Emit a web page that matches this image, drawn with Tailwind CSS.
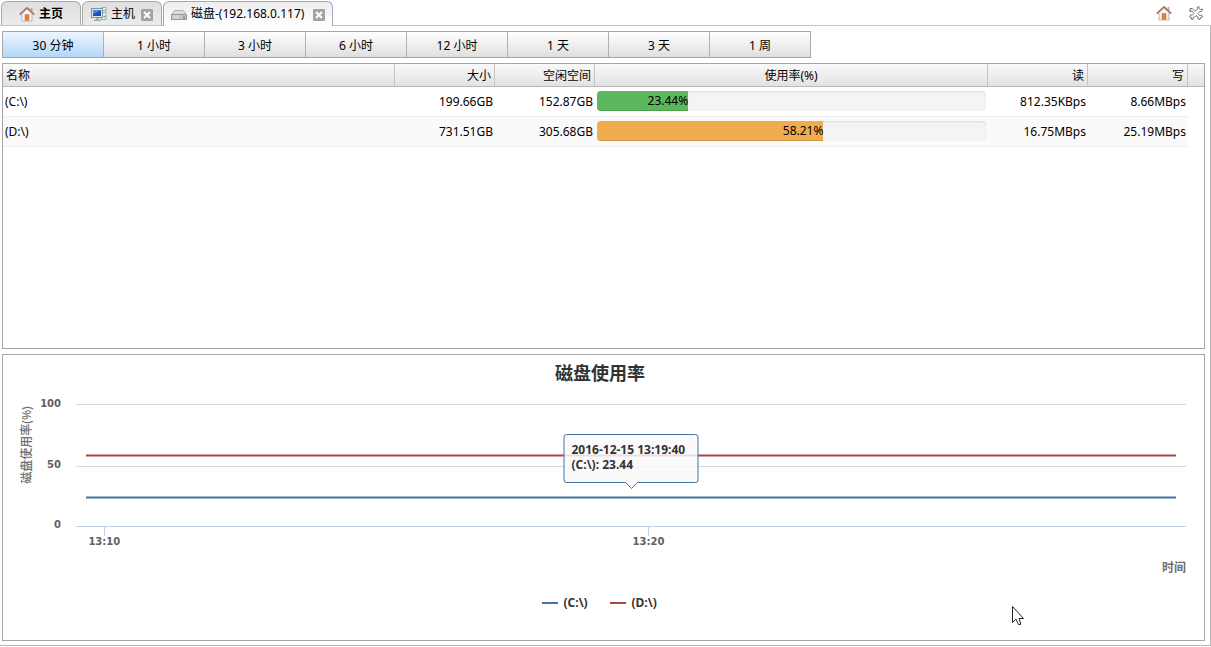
<!DOCTYPE html>
<html lang="zh-CN">
<head>
<meta charset="utf-8">
<title>磁盘</title>
<script src="https://cdn.jsdelivr.net/npm/@tailwindcss/browser@4"></script>
</head>
<body class="bg-white font-['Noto_Sans','Noto_Sans_CJK_SC',sans-serif] text-[12px] leading-4 text-black">
<svg class="hidden" aria-hidden="true">
  <symbol id="home" viewBox="0 0 16 16">
    <path d="M3 7.500 8 3 13 7.500V15H3Z" fill="#f6f6f6" stroke="#b9b9b9"/>
    <path d="M11.500 2h2v4l-2-2Z" fill="#c9a79a"/>
    <path d="M.7 8.600 8 1.800 15.300 8.600" fill="none" stroke="#a8705f" stroke-width="1.500"/>
    <path d="M6 8.500h4V14.500h-4Z" fill="#ea7a2c" stroke="#c9875a" stroke-width=".6"/>
  </symbol>
  <symbol id="host" viewBox="0 0 16 16">
    <path d="M10.500 1.500h4.500v12h-4.500Z" fill="#eef0f2" stroke="#a3a8ad"/>
    <path d="M11.500 4.500h3M11.500 6.500h3" stroke="#9da3a8"/>
    <path d="M12.500 10.500h2" stroke="#58b947" stroke-width="1.500"/>
    <rect x=".5" y="2.500" width="11" height="9" fill="#dde3ea" stroke="#8492a3"/>
    <path d="M2 4h8v6H2Z" fill="#1b4fb5"/>
    <path d="M2 4h8L2 8.500Z" fill="#4a86de"/>
    <path d="M5 12h3v1.500h2v1.500H3v-1.500h2Z" fill="#a3abb5"/>
  </symbol>
  <symbol id="disk" viewBox="0 0 16 16">
    <path d="M3.500 4.500h9L15.500 9v4.500h-15V9Z" fill="#dcdcdc" stroke="#b0b0b0"/>
    <path d="M.5 8.500h15v5H.5Z" fill="#c4c4c4" stroke="#969696"/>
    <path d="M2 10h6M2 12h6" stroke="#e6e6e6"/>
    <path d="M12 11.500h2" stroke="#d0565c" stroke-width="1.500"/>
  </symbol>
  <symbol id="close" viewBox="0 0 12 12">
    <rect width="12" height="12" rx="1" fill="#a3a3a3"/>
    <path d="M3 3 9 9M9 3 3 9" stroke="#fff" stroke-width="2"/>
  </symbol>
</svg>

<div class="flex h-screen min-h-[560px] flex-col pb-px">
  <header class="flex h-[26px] shrink-0 items-end justify-between border-b border-[#c3c3c3]">
    <nav class="flex items-end gap-px pl-px">
      <button class="flex h-6 w-20 items-center justify-center gap-1 rounded-t-md border border-b-0 border-[#aaa] bg-linear-to-b from-[#dedede] to-[#ececec] font-bold"><svg class="size-4"><use href="#home"/></svg>主页</button>
      <div class="flex h-6 w-20 items-center justify-center gap-1 rounded-t-md border border-b-0 border-[#aaa] bg-linear-to-b from-[#dedede] to-[#ececec]">
        <button class="flex items-center gap-1"><svg class="size-4"><use href="#host"/></svg>主机</button>
        <button class="ml-0.5 pt-0.5" aria-label="关闭主机"><svg class="size-3"><use href="#close"/></svg></button>
      </div>
      <div class="-mb-px flex h-[25px] w-[170px] items-center justify-between rounded-t-md border border-b-0 border-[#9ba9bd] bg-linear-to-b from-[#eeeeee] to-white px-[7px]">
        <button class="flex items-center gap-1 whitespace-nowrap"><svg class="size-4"><use href="#disk"/></svg>磁盘-(192.168.0.117)</button>
        <button class="pt-0.5" aria-label="关闭磁盘"><svg class="size-3"><use href="#close"/></svg></button>
      </div>
    </nav>
    <div class="flex gap-4 pr-[7px] pb-1">
      <button aria-label="主页"><svg class="size-4"><use href="#home"/></svg></button>
      <button aria-label="全部关闭"><svg class="size-4" viewBox="0 0 16 16"><path d="M2 3.500H4.500L6 5.500 7.500 6 9.500 4 9 2.500 11 1.500V3.500L12.500 4.500 14.500 4 13.500 6.500H11.500L10 8.500 11.500 10.500 13.500 10 14.500 12 12.500 12.500 12 14.500 10 14V12L8 10.500 6.500 12 5 12.500V14.500L3 14 3.500 12.500 1.500 12 2.500 10H4.500L6 8.500 4.500 6.500 2 6.500 1.500 5 3 5Z" fill="#fff" stroke="#777"/></svg></button>
    </div>
  </header>

  <main class="flex min-h-0 flex-1 flex-col gap-[5px] border-r border-b border-[#b5b5b5] pt-[5px] pr-[5px] pb-1 pl-0.5">
    <div class="flex h-[27px] w-[809px] max-w-full shrink-0 border border-[#a6a6a6] bg-linear-to-b from-white to-[#dfdfdf] *:pt-0.5">
      <button class="flex-1 bg-linear-to-b from-[#edf6ff] to-[#b3d7f8]">30 分钟</button>
      <button class="flex-1 border-l border-[#b0b0b0]">1 小时</button>
      <button class="flex-1 border-l border-[#b0b0b0]">3 小时</button>
      <button class="flex-1 border-l border-[#b0b0b0]">6 小时</button>
      <button class="flex-1 border-l border-[#b0b0b0]">12 小时</button>
      <button class="flex-1 border-l border-[#b0b0b0]">1 天</button>
      <button class="flex-1 border-l border-[#b0b0b0]">3 天</button>
      <button class="flex-1 border-l border-[#b0b0b0]">1 周</button>
    </div>

    <section class="min-h-0 flex-1 overflow-hidden border border-[#a6a6a6]">
      <table class="w-full table-fixed border-separate border-spacing-0">
        <colgroup><col class="w-[392px]"><col class="w-[100px]"><col class="w-[100px]"><col><col class="w-[100px]"><col class="w-[100px]"><col class="w-4"></colgroup>
        <thead>
          <tr class="h-[23px] *:border-b *:border-b-[#b8b8b8] *:bg-linear-to-b *:from-[#fafafa] *:to-[#e2e2e2] *:px-[3px] *:pt-0.5 *:pb-0 *:font-normal">
            <th class="border-r border-r-[#c4c4c4] text-left">名称</th>
            <th class="border-r border-r-[#c4c4c4] text-right">大小</th>
            <th class="border-r border-r-[#c4c4c4] text-right">空闲空间</th>
            <th class="border-r border-r-[#c4c4c4] text-center">使用率(%)</th>
            <th class="border-r border-r-[#c4c4c4] text-right">读</th>
            <th class="border-r border-r-[#c4c4c4] text-right">写</th>
            <td></td>
          </tr>
        </thead>
        <tbody>
          <tr class="h-[30px] text-right *:p-0 *:px-0.5">
            <td class="border-b border-[#eee] text-left">(C:\)</td>
            <td class="border-b border-[#eee]">199.66GB</td>
            <td class="border-b border-[#eee]">152.87GB</td>
            <td class="border-b border-[#eee] align-top"><div class="mt-1 h-5 overflow-hidden rounded bg-[#f4f4f4] shadow-[inset_0_1px_2px_#0000001a]"><div class="h-full bg-[#5cb85c] leading-5 shadow-[inset_0_-1px_0_#00000026]" style="width:23.44%">23.44%</div></div></td>
            <td class="border-b border-[#eee]">812.35KBps</td>
            <td class="border-b border-[#eee]">8.66MBps</td>
            <td></td>
          </tr>
          <tr class="h-[30px] text-right *:p-0 *:px-0.5">
            <td class="border-b border-[#eee] bg-[#fafafa] text-left">(D:\)</td>
            <td class="border-b border-[#eee] bg-[#fafafa]">731.51GB</td>
            <td class="border-b border-[#eee] bg-[#fafafa]">305.68GB</td>
            <td class="border-b border-[#eee] bg-[#fafafa] align-top"><div class="mt-1 h-5 overflow-hidden rounded bg-[#f4f4f4] shadow-[inset_0_1px_2px_#0000001a]"><div class="h-full bg-[#f0ad4e] leading-5 shadow-[inset_0_-1px_0_#00000026]" style="width:58.21%">58.21%</div></div></td>
            <td class="border-b border-[#eee] bg-[#fafafa]">16.75MBps</td>
            <td class="border-b border-[#eee] bg-[#fafafa]">25.19MBps</td>
            <td></td>
          </tr>
        </tbody>
      </table>
    </section>

    <section class="flex shrink-0 flex-col border border-[#a6a6a6] pr-[18px] pb-[29px] pl-4 font-bold text-[#333]">
      <h2 class="pt-1.5 pr-[5px] text-center text-[18px] leading-6">磁盘使用率</h2>
      <div class="mt-[19px] flex h-[121px] shrink-0">
        <div class="flex h-[82px] w-4 items-center justify-center"><span class="-rotate-90 font-medium whitespace-nowrap text-[#707070]">磁盘使用率(%)</span></div>
        <div class="-my-2 flex w-[26px] flex-col justify-between text-right font-['DejaVu_Sans'] text-[10px] text-[#606060]"><span>100</span><span>50</span><span>0</span></div>
        <div class="relative ml-[15px] flex-1">
          <svg class="block h-full w-full overflow-visible" role="img" aria-label="磁盘使用率">
            <g stroke="#d8d8d8" shape-rendering="crispEdges"><line x1="0" x2="100%" y1=".5" y2=".5"/><line x1="0" x2="100%" y1="62.500" y2="62.500"/></g>
            <g stroke="#c0d0e0" shape-rendering="crispEdges"><line x1="0" x2="100%" y1="122.500" y2="122.500"/><line x1="2.550%" x2="2.550%" y1="122" y2="132"/><line x1="51.580%" x2="51.580%" y1="122" y2="132"/></g>
            <g stroke-width="2"><line x1=".9%" x2="99.100%" y1="51.500" y2="51.500" stroke="#aa4643"/><line x1=".9%" x2="99.100%" y1="93.500" y2="93.500" stroke="#4572a7"/></g>
            <g class="font-['DejaVu_Sans'] text-[10px]" fill="#606060" text-anchor="middle"><text x="2.550%" y="141">13:10</text><text x="51.580%" y="141">13:20</text></g>
          </svg>
          <div class="absolute top-[30px] left-1/2 w-[135px] -translate-x-1/2 rounded-[3px] border border-[#4572a7] bg-[#f9f9f9]/85 px-[7px] pt-[7px] pb-2.5 leading-[15px] whitespace-nowrap">2016-12-15 13:19:40<br>(C:\): 23.44
            <svg class="absolute top-full left-1/2 h-[7px] w-[13px] -translate-x-1/2" viewBox="0 0 13 7"><path d="M0 0H13L6.500 6Z" fill="#f9f9f9"/><path d="M.5 .5 6.500 6.500 12.500 .5" fill="none" stroke="#4572a7"/></svg>
          </div>
        </div>
      </div>
      <div class="mt-[35px] text-right text-[#707070]">时间</div>
      <div class="mt-[19px] flex justify-center gap-5 pr-[6px]">
        <button class="flex w-12 items-center gap-[6px]"><span class="h-0.5 w-4 bg-[#4572a7]"></span>(C:\)</button>
        <button class="flex w-12 items-center gap-[6px]"><span class="h-0.5 w-4 bg-[#aa4643]"></span>(D:\)</button>
      </div>
    </section>
  </main>
</div>
<svg class="absolute top-[606px] left-[1012px] h-5 w-3" viewBox="0 0 12 20" aria-hidden="true"><path d="M.5 .5V16.500L4 13 6.500 18.500H8.500V17L7 12.500H11.500Z" fill="#fff" stroke="#222"/></svg>
</body>
</html>
